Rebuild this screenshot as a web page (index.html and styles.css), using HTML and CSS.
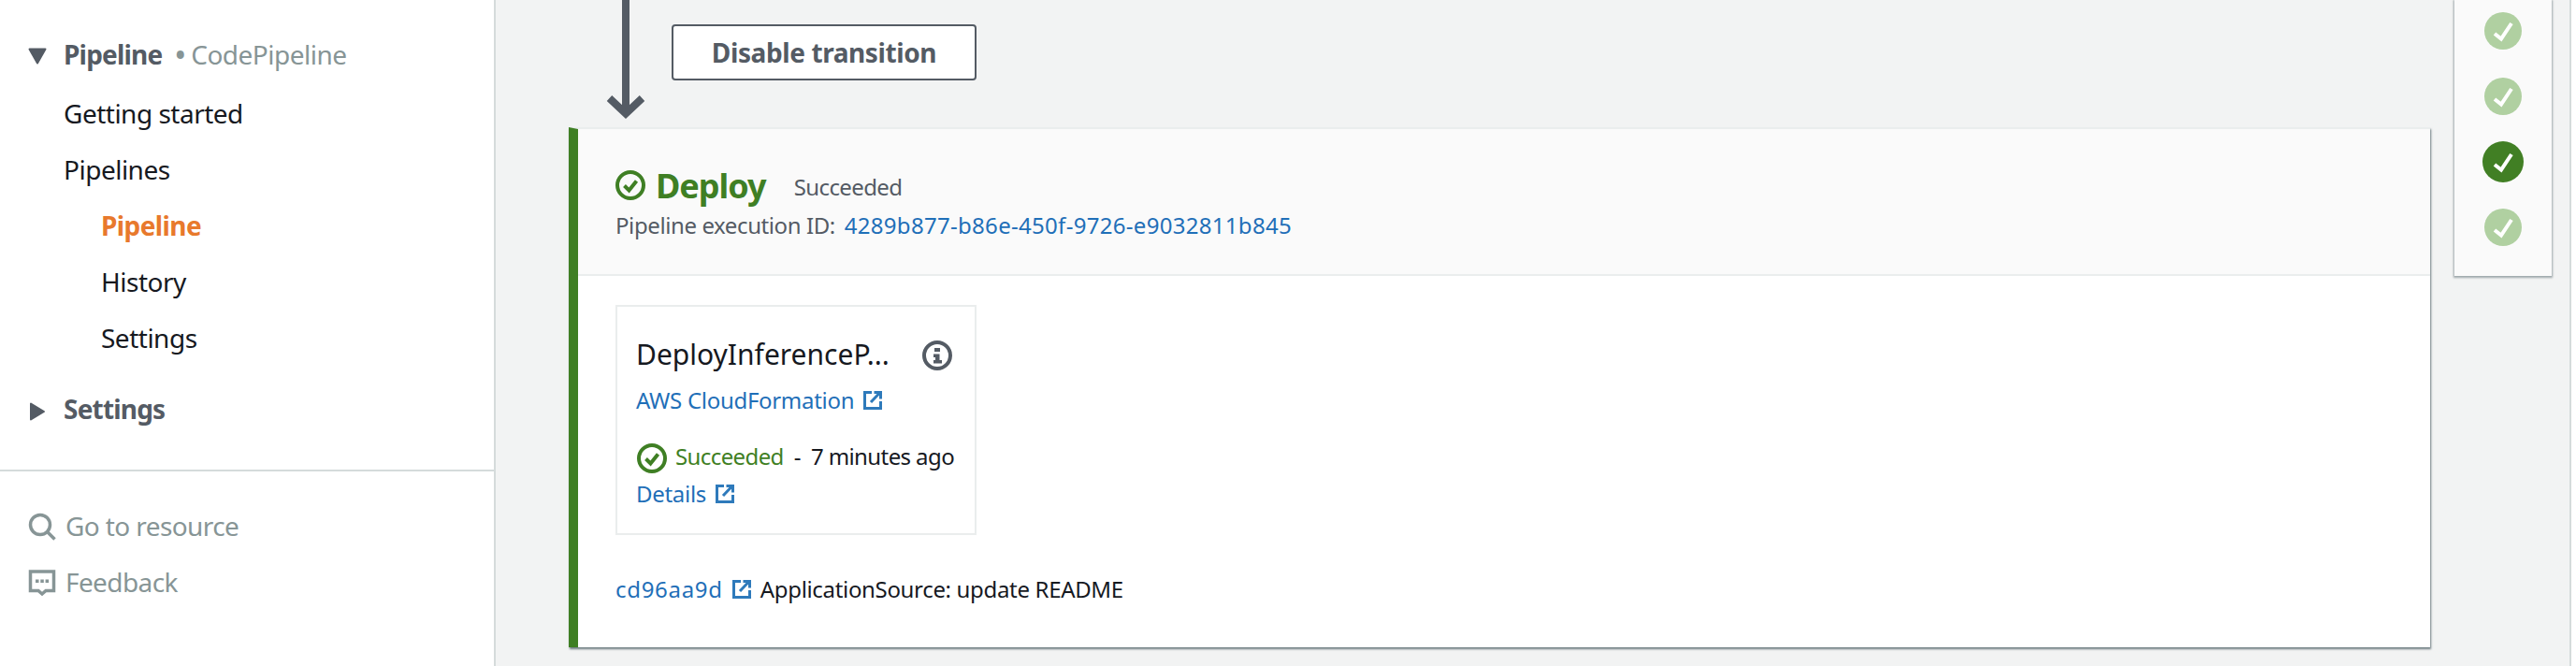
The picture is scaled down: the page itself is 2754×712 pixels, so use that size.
FILE: index.html
```html
<!DOCTYPE html>
<html lang="en">
<head>
    <meta charset="UTF-8">
    <title>Pipeline - CodePipeline</title>
    <link rel="stylesheet" href="styles.css">
</head>
<body>
    <div class="page">

        <!-- Navegacion lateral -->
        <nav class="sidebar">
            <div class="nav-section">
                <div class="nav-header">
                    <svg class="caret" width="20" height="18" viewBox="0 0 20 18"><path d="M1.500 1.500h17L10 16.500z" fill="#545b64" stroke="#545b64" stroke-width="2" stroke-linejoin="round"/></svg>
                    <span class="nav-title">Pipeline</span>
                    <span class="nav-service"><span class="nav-dot">•</span> CodePipeline</span>
                </div>
                <a class="nav-link">Getting started</a>
                <a class="nav-link">Pipelines</a>
                <a class="nav-link sub active">Pipeline</a>
                <a class="nav-link sub">History</a>
                <a class="nav-link sub">Settings</a>
            </div>
            <div class="nav-header settings-header">
                <svg class="caret" width="20" height="20" viewBox="0 0 20 20"><path d="M3 1.500v17L17 10z" fill="#545b64" stroke="#545b64" stroke-width="2" stroke-linejoin="round"/></svg>
                <span class="nav-title">Settings</span>
            </div>
            <div class="nav-footer">
                <a class="nav-tool">
                    <svg width="30" height="30" viewBox="0 0 30 30" fill="none" stroke="#879596" stroke-width="3.500"><circle cx="13" cy="13" r="10.500"/><path d="M20.500 20.500l8 8"/></svg>
                    <span>Go to resource</span>
                </a>
                <a class="nav-tool">
                    <svg width="30" height="30" viewBox="0 0 30 30"><path d="M2.500 3h25v20.500h-8.500l-4 3.500-4-3.500H2.500z" fill="none" stroke="#879596" stroke-width="3.500"/><path d="M8 11.500h3.500V15H8zM13.300 11.500h3.500V15h-3.500zM18.600 11.500h3.500V15h-3.500z" fill="#879596"/></svg>
                    <span>Feedback</span>
                </a>
            </div>
        </nav>

        <main class="content">
            <div class="stages">
                <div class="transition">
                    <svg class="arrow" width="42" height="128" viewBox="0 0 42 128" fill="none" stroke="#545b64" stroke-width="8"><path d="M21 0v120"/><path d="M3.500 105l17.500 16.500L38.500 105"/></svg>
                    <button class="transition-button">Disable transition</button>
                </div>

                <section class="stage">
                    <header class="stage-header">
                        <div class="stage-title">
                            <svg width="32" height="32" viewBox="0 0 32 32" fill="none" stroke="#3f7f24" stroke-width="4"><circle cx="16" cy="16" r="14"/><path d="M9.500 16.500l5 5 8-10"/></svg>
                            <h2>Deploy</h2>
                            <span class="stage-status">Succeeded</span>
                        </div>
                        <p class="execution">Pipeline execution ID: <a class="link">4289b877-b86e-450f-9726-e9032811b845</a></p>
                    </header>
                    <div class="stage-body">
                        <div class="action-card">
                            <div class="action-title">
                                <span class="action-name">DeployInferenceP...</span>
                                <svg width="32" height="32" viewBox="0 0 32 32"><circle cx="16" cy="16" r="14" fill="none" stroke="#545b64" stroke-width="4"/><path d="M13 8h6v4h-6zM12 14.500h6.500v6.500H21v3.500h-9V21h2v-3h-2z" fill="#545b64"/></svg>
                            </div>
                            <a class="link provider"><span>AWS CloudFormation</span>
                                <svg class="ext" width="20" height="20" viewBox="0 0 20 20" fill="none" stroke="#2e7abb" stroke-width="3"><path d="M9 1.500H1.500v17h17V11"/><path d="M8 12l9-9.500M11.500 1.500h7v7"/></svg>
                            </a>
                            <div class="action-status">
                                <svg width="32" height="32" viewBox="0 0 32 32" fill="none" stroke="#3f7f24" stroke-width="4"><circle cx="16" cy="16" r="14"/><path d="M9.500 16.500l5 5 8-10"/></svg>
                                <span class="ok">Succeeded</span>
                                <span class="dash">-</span>
                                <span>7 minutes ago</span>
                            </div>
                            <a class="link details"><span>Details</span>
                                <svg class="ext" width="20" height="20" viewBox="0 0 20 20" fill="none" stroke="#2e7abb" stroke-width="3"><path d="M9 1.500H1.500v17h17V11"/><path d="M8 12l9-9.500M11.500 1.500h7v7"/></svg>
                            </a>
                        </div>
                        <p class="commit">
                            <a class="link"><span class="commit-id">cd96aa9d</span>
                                <svg class="ext" width="20" height="20" viewBox="0 0 20 20" fill="none" stroke="#2e7abb" stroke-width="3"><path d="M9 1.500H1.500v17h17V11"/><path d="M8 12l9-9.500M11.500 1.500h7v7"/></svg>
                            </a>
                            <span class="commit-message">ApplicationSource: update README</span>
                        </p>
                    </div>
                </section>
            </div>

            <!-- Resumen de etapas -->
            <aside class="overview">
                <span class="dot"><svg width="24" height="24" viewBox="0 0 24 24" fill="none" stroke="#fff" stroke-width="4"><path d="M3 15l7 5.500L21 4"/></svg></span>
                <span class="dot"><svg width="24" height="24" viewBox="0 0 24 24" fill="none" stroke="#fff" stroke-width="4"><path d="M3 15l7 5.500L21 4"/></svg></span>
                <span class="dot current"><svg width="24" height="24" viewBox="0 0 24 24" fill="none" stroke="#fff" stroke-width="4"><path d="M3 15l7 5.500L21 4"/></svg></span>
                <span class="dot"><svg width="24" height="24" viewBox="0 0 24 24" fill="none" stroke="#fff" stroke-width="4"><path d="M3 15l7 5.500L21 4"/></svg></span>
            </aside>
        </main>

        <div class="rail"></div>
    </div>
</body>
</html>
```

FILE: styles.css
```css
/* General */
html, body {
    margin: 0;
    padding: 0;
    height: 712px;
    overflow: hidden;
}
body {
    font-family: "Noto Sans", sans-serif;
    color: #16191f;
    background-color: #fff;
}
.page {
    display: flex;
    height: 712px;
}
a {
    text-decoration: none;
}
.link {
    color: #1f6fb8;
}
svg {
    flex: none;
}

/* ========== Sidebar ========== */
.sidebar {
    box-sizing: border-box;
    width: 530px;
    flex: none;
    padding-top: 28px;
    border-right: 2px solid #d5dbdb;
    font-size: 28px;
    letter-spacing: -0.5px;
}
.nav-section {
    display: flex;
    flex-direction: column;
}
.nav-header {
    display: flex;
    align-items: center;
    height: 60px;
    margin-bottom: 3px;
    padding-left: 30px;
    color: #545b64;
}
.caret {
    width: 20px;
    margin-right: 18px;
    margin-top: 4px;
}
.nav-title {
    font-weight: 700;
    letter-spacing: -0.8px;
}
.nav-service {
    margin-left: 14px;
    color: #879596;
}
.nav-dot {
    font-weight: 700;
}
.nav-link {
    display: flex;
    align-items: center;
    height: 60px;
    padding-left: 68px;
    color: #16191f;
}
.nav-link.sub {
    padding-left: 108px;
}
.nav-link.active {
    color: #e8792c;
    font-weight: 700;
    letter-spacing: -0.6px;
}
.settings-header {
    margin-top: 17px;
    margin-bottom: 0;
}
.settings-header .nav-title {
    margin-bottom: 3px;
}
.nav-footer {
    display: flex;
    flex-direction: column;
    margin-top: 34px;
    padding: 29px 0 0 30px;
    border-top: 2px solid #d5dbdb;
}
.nav-tool {
    display: flex;
    align-items: center;
    gap: 10px;
    height: 60px;
    color: #879596;
    letter-spacing: -0.6px;
}
.nav-tool span {
    margin-bottom: 2px;
}

/* ========== Contenido ========== */
.content {
    flex: 1;
    display: flex;
    gap: 26px;
    padding-left: 78px;
    background-color: #f2f3f3;
}
.stages {
    width: 1990px;
    flex: none;
}
.transition {
    display: flex;
    align-items: flex-start;
    height: 136px;
}
.arrow {
    margin-left: 40px;
}
.transition-button {
    box-sizing: border-box;
    width: 326px;
    height: 60px;
    margin: 26px 0 0 28px;
    background-color: #fff;
    border: 2px solid #545b64;
    border-radius: 4px;
    color: #545b64;
    font-family: inherit;
    font-size: 28px;
    font-weight: 700;
    letter-spacing: -0.4px;
}

/* Etapa */
.stage {
    box-sizing: border-box;
    height: 556px;
    background-color: #fff;
    border-top: 2px solid #eaeded;
    border-left: 10px solid #3f7f24;
    box-shadow: 1px 2px 2px rgba(0, 28, 36, 0.55);
}
.stage-header {
    box-sizing: border-box;
    height: 157px;
    padding: 42px 0 0 40px;
    background-color: #fafafa;
    border-bottom: 2px solid #eaeded;
}
.stage-title {
    display: flex;
    align-items: center;
    height: 36px;
}
.stage-title h2 {
    margin: 0 30px 0 11px;
    color: #3f7f24;
    font-size: 36px;
    font-weight: 700;
    letter-spacing: -1px;
}
.stage-status {
    margin-top: 3px;
    color: #545b64;
    font-size: 24px;
    letter-spacing: -0.6px;
}
.execution {
    margin: 9px 0 0;
    color: #545b64;
    font-size: 24px;
    line-height: 32px;
    letter-spacing: -0.4px;
}
.execution .link {
    margin-left: 4px;
    letter-spacing: 0.3px;
}
.stage-body {
    padding: 31px 0 0 40px;
}

/* Tarjeta de accion */
.action-card {
    box-sizing: border-box;
    width: 386px;
    height: 246px;
    padding: 36px 24px 0 21px;
    background-color: #fff;
    border: 2px solid #eaeded;
    font-size: 24px;
}
.action-title {
    display: flex;
    justify-content: space-between;
    align-items: center;
    height: 32px;
    font-size: 30px;
}
.action-name {
    margin-bottom: 3px;
    margin-left: -1px;
}
.provider, .details {
    display: flex;
    align-items: center;
    gap: 10px;
    height: 32px;
    letter-spacing: -0.3px;
}
.provider span, .details span {
    margin-bottom: 2px;
    margin-left: -1px;
}
.provider {
    margin-top: 16px;
}
.action-status {
    display: flex;
    align-items: center;
    height: 32px;
    margin-top: 30px;
    white-space: nowrap;
    letter-spacing: -0.6px;
}
.action-status span {
    margin-bottom: 5px;
}
.action-status .ok {
    margin-left: 9px;
    color: #3f7f24;
}
.action-status .dash {
    margin-left: 11px;
    margin-right: 11px;
}
.details {
    margin-top: 6px;
}
.commit {
    display: flex;
    align-items: center;
    gap: 10px;
    margin: 42px 0 0;
    font-size: 24px;
    line-height: 32px;
}
.commit .link {
    display: flex;
    align-items: center;
    gap: 10px;
}
.commit-id {
    letter-spacing: 0.7px;
}
.commit-message {
    letter-spacing: -0.33px;
}

/* Resumen de etapas */
.overview {
    box-sizing: border-box;
    display: flex;
    flex-direction: column;
    align-items: center;
    gap: 30px;
    width: 104px;
    height: 295px;
    padding-top: 13px;
    background-color: #fafafa;
    box-shadow: 0 1px 2px 1px rgba(0, 28, 36, 0.35);
}
.dot {
    display: flex;
    justify-content: center;
    align-items: center;
    width: 40px;
    height: 40px;
    border-radius: 50%;
    background-color: #b0d0a1;
}
.dot.current {
    width: 44px;
    height: 44px;
    margin: -2px 0;
    background-color: #417f24;
}
.rail {
    box-sizing: border-box;
    width: 7px;
    flex: none;
    background-color: #fff;
    border-left: 2px solid #d5dbdb;
}
```
